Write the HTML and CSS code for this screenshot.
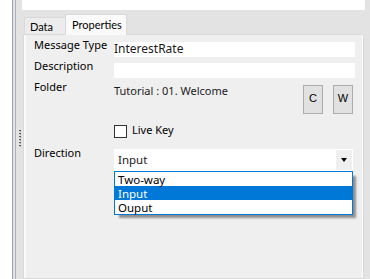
FILE: index.html
```html
<!DOCTYPE html>
<html>
<head>
<meta charset="UTF-8">
  <title>Properties</title>
  <link rel="stylesheet" href="styles.css">
</head>
<body>
  <div class="window">
    <div class="gutter"></div>

    <div class="splitter">
      <svg class="grip" width="3" height="18" viewBox="0 0 3 18">
        <rect x="0" y="0" width="2" height="1" fill="#5a5a5a" />
        <rect x="0" y="3" width="2" height="1" fill="#5a5a5a" />
        <rect x="0" y="6" width="2" height="1" fill="#5a5a5a" />
        <rect x="0" y="9" width="2" height="1" fill="#5a5a5a" />
        <rect x="0" y="12" width="2" height="1" fill="#5a5a5a" />
        <rect x="0" y="15" width="2" height="1" fill="#5a5a5a" />
        <rect x="1" y="1" width="1" height="1" fill="#9a9a9a" />
        <rect x="1" y="4" width="1" height="1" fill="#9a9a9a" />
        <rect x="1" y="7" width="1" height="1" fill="#9a9a9a" />
        <rect x="1" y="10" width="1" height="1" fill="#9a9a9a" />
        <rect x="1" y="13" width="1" height="1" fill="#9a9a9a" />
        <rect x="1" y="16" width="1" height="1" fill="#9a9a9a" />
      </svg>
    </div>

    <div class="main">
      <div class="top-field"></div>

      <div class="tabs">
        <div class="tab">Data</div>
        <div class="tab active">Properties</div>
      </div>

      <div class="tab-page">
        <div class="row">
          <div class="label">Message Type</div>
          <div class="textbox">InterestRate</div>
        </div>
        <div class="row">
          <div class="label">Description</div>
          <div class="textbox"></div>
        </div>
        <div class="row folder-row">
          <div class="label">Folder</div>
          <div class="folder">Tutorial : 01. Welcome</div>
          <button class="small-btn">C</button>
          <button class="small-btn last">W</button>
        </div>
        <div class="check-row">
          <span class="checkbox"></span>
          <span class="check-label">Live Key</span>
        </div>
        <div class="row direction-row">
          <div class="label">Direction</div>
          <div class="combo">
            <span class="combo-text">Input</span>
            <span class="combo-arrow"><span class="arrow"></span></span>
            <ul class="dropdown">
              <li>Two-way</li>
              <li class="selected">Input</li>
              <li>Ouput</li>
            </ul>
          </div>
        </div>
      </div>
    </div>
  </div>
</body>
</html>
```

FILE: styles.css
```css
body {
  margin: 0;
  width: 370px;
  height: 279px;
  overflow: hidden;
  background: #fff;
  font-family: 'Noto Sans', sans-serif;
  color: #000;
}

.window {
  display: flex;
  height: 279px;
}

.gutter {
  width: 12px;
  background: #fff;
}

.splitter {
  width: 9px;
  border-left: 1px solid #a0a0a0;
  background: linear-gradient(to right, #e3e3e3 2px, #a7afc2 2px, #a7afc2 3px, #e3e3e3 3px);
  padding-top: 130px;
  box-sizing: content-box;
}

.grip {
  display: block;
  margin-left: 6px;
}

.main {
  flex: 1;
  display: flex;
  flex-direction: column;
  background: #e3e3e3;
}

.top-field {
  height: 10px;
  margin-right: 5px;
  background: #fff;
}

/* Tabs */
.tabs {
  display: flex;
  align-items: flex-end;
  height: 24px;
  margin-left: 2px;
  font-family: Lato, sans-serif;
  font-size: 11px;
}

.tab {
  height: 17px;
  box-sizing: border-box;
  width: 41px;
  padding: 3px 0 0 5px;
  line-height: 12px;
  border: 1px solid #d9d9d9;
  border-right: none;
  border-bottom: none;
  background: #ececec;
}

.tab.active {
  position: relative;
  width: 62px;
  height: 21px;
  margin-bottom: -1px;
  padding: 4px 0 0 6px;
  border-right: 1px solid #d9d9d9;
  background: #fafafa;
}

/* Tab page */
.tab-page {
  flex: 1;
  margin: 0 6px 0 1px;
  padding: 2px 8px 0 10px;
  border: 1px solid #d9d9d9;
  background: #efefef;
  box-shadow: inset 2px 0 #fafafa, inset -1px 0 #fff;
}

.row {
  display: flex;
  height: 21px;
}

.label {
  width: 80px;
  flex-shrink: 0;
  font-size: 11px;
  line-height: 15px;
}

.textbox {
  flex: 1;
  height: 15px;
  margin-top: 5px;
  background: #fff;
  font-size: 12px;
  line-height: 13px;
  color: #1a1a1a;
}

.folder-row {
  height: 43px;
}

.folder {
  flex: 1;
  margin-top: 4px;
  font-size: 11px;
  line-height: 15px;
  color: #1a1a1a;
}

.small-btn {
  width: 20px;
  height: 29px;
  margin-top: 6px;
  margin-left: 10px;
  padding: 5px 0 0;
  border: 1px solid #adadad;
  background: #e1e1e1;
  font-family: 'Liberation Sans', sans-serif;
  font-size: 11px;
  line-height: 15px;
  color: #000;
  align-self: flex-start;
  box-sizing: border-box;
  display: flex;
  justify-content: center;
  align-items: flex-start;
}

.small-btn.last {
  margin-right: 2px;
}

.check-row {
  display: flex;
  align-items: flex-start;
  gap: 5px;
  height: 23px;
  padding-left: 80px;
}

.checkbox {
  width: 13px;
  height: 13px;
  box-sizing: border-box;
  margin-top: 3px;
  border: 1px solid #333;
  background: #fff;
}

.check-label {
  font-size: 11px;
  line-height: 15px;
}

.direction-row {
  height: auto;
}

.combo {
  position: relative;
  flex: 1;
  display: flex;
  height: 22px;
  margin: 4px 2px 0 0;
  background: #fff;
  font-size: 11.5px;
}

.combo-text {
  flex: 1;
  padding-left: 4px;
  line-height: 22px;
  color: #1a1a1a;
}

.combo-arrow {
  width: 16px;
  margin: 1px 1px 1px 0;
  background: #efefef;
  display: flex;
  justify-content: center;
  align-items: center;
}

.arrow {
  width: 0;
  height: 0;
  border-left: 3.5px solid transparent;
  border-right: 3.5px solid transparent;
  border-top: 4px solid #000;
}

.dropdown {
  position: absolute;
  top: 100%;
  left: 0;
  right: 0;
  margin: 0;
  padding: 0;
  list-style: none;
  border: 1px solid #0078d7;
  background: #fff;
  box-shadow: 4px 4px 2px -1px rgba(0, 0, 0, 0.4);
}

.dropdown li {
  height: 14px;
  padding: 1px 0 0 3px;
  box-sizing: border-box;
  line-height: 13px;
}

.dropdown li.selected {
  background: #0078d7;
  color: #fff;
}
```
